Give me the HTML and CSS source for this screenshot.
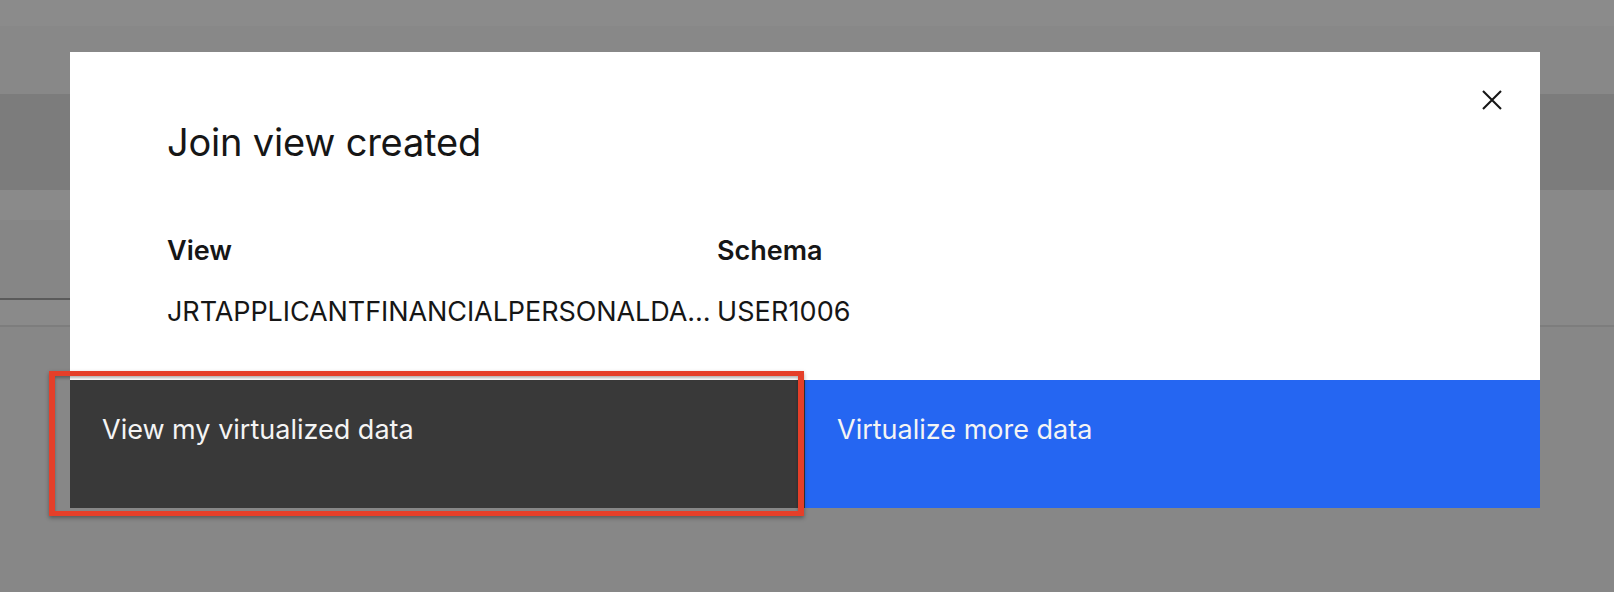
FILE: index.html
```html
<!DOCTYPE html>
<html lang="en">
<head>
<meta charset="utf-8">
<title>Join view created</title>
<link rel="stylesheet" href="styles.css">
</head>
<body>
  <div class="page">
    <div class="band b1"></div>
    <div class="band b2"></div>
    <div class="band b3"></div>
    <div class="band-row">
      <div class="side">
        <div class="s1"></div>
        <div class="s2"></div>
        <div class="s3"></div>
        <div class="s4"></div>
      </div>
      <div class="main-area"></div>
    </div>
    <div class="band rule"></div>
    <div class="band rest"></div>
  </div>

  <div class="overlay">
    <div class="modal" role="dialog" aria-label="Join view created">
      <div class="modal-body">
        <h2 class="modal-title">Join view created</h2>
        <div class="details">
          <div class="cell label">View</div>
          <div class="cell label">Schema</div>
          <div class="cell value tight" title="JRTAPPLICANTFINANCIALPERSONALDATA">JRTAPPLICANTFINANCIALPERSONALDA…</div>
          <div class="cell value">USER1006</div>
        </div>
      </div>
      <button class="close" aria-label="Close">
        <svg width="20" height="20" viewBox="0 0 20 20" aria-hidden="true">
          <path d="M1 1 L19 19 M19 1 L1 19" stroke="#161616" stroke-width="2.1" fill="none"/>
        </svg>
      </button>
      <div class="modal-footer">
        <button class="btn btn-secondary">View my virtualized data</button>
        <button class="btn btn-primary">Virtualize more data</button>
      </div>
    </div>
  </div>

  <div class="highlight"></div>
</body>
</html>
```

FILE: styles.css
```css
* { box-sizing: border-box; }

html, body {
  margin: 0;
  padding: 0;
  width: 1614px;
  height: 592px;
  overflow: hidden;
  background: #878787;
  font-family: "Inter", "Noto Sans", sans-serif;
}

.page {
  display: flex;
  flex-direction: column;
  width: 100%;
}

.band { width: 100%; }
.b1 { height: 26px; background: #8b8b8b; }
.b2 { height: 68px; background: #888888; }
.b3 { height: 96px; background: #7c7c7c; }

.band-row {
  display: flex;
  height: 135px;
}
.side {
  width: 300px;
  display: flex;
  flex-direction: column;
}
.s1 { height: 30px; background: #8a8a8a; }
.s2 { height: 78px; background: #868686; }
.s3 { height: 2px; background: #5a5a5a; }
.s4 { height: 25px; background: #8a8a8a; }
.main-area { flex: 1; background: #898989; }

.rule { height: 2px; background: #7d7d7d; }
.rest { height: 265px; background: #878787; }

.overlay {
  position: fixed;
  inset: 0;
  padding: 52px 0 0 70px;
}

.modal {
  position: relative;
  width: 1470px;
  background: #ffffff;
  color: #161616;
}

.modal-body {
  padding: 62px 97px 48px 97px;
}

.modal-title {
  margin: 0;
  font-size: 38px;
  line-height: 56px;
  font-weight: 400;
  letter-spacing: -0.2px;
}

.details {
  margin-top: 61px;
  display: grid;
  grid-template-columns: 550px 1fr;
  row-gap: 21px;
}

.cell {
  font-size: 27px;
  line-height: 40px;
  white-space: nowrap;
}
.label { font-weight: 600; }
.value { font-weight: 400; letter-spacing: 0.1px; }
.tight { letter-spacing: -0.08px; }

.close {
  position: absolute;
  top: 0;
  right: 0;
  width: 96px;
  height: 96px;
  border: 0;
  background: transparent;
  padding: 0;
  display: flex;
  align-items: center;
  justify-content: center;
}

.modal-footer {
  display: grid;
  grid-template-columns: 1fr 1fr;
  height: 128px;
}

.btn {
  border: 0;
  margin: 0;
  text-align: left;
  font-family: inherit;
  font-size: 27px;
  line-height: 40px;
  font-weight: 400;
  color: #f4f4f4;
  padding: 30px 32px 0 32px;
  display: flex;
  align-items: flex-start;
}
.btn-secondary { background: #393939; }
.btn-primary { background: #2566f2; }

.highlight {
  position: absolute;
  left: 49px;
  top: 371px;
  width: 755px;
  height: 145px;
  border-style: solid;
  border-color: #e53f29;
  border-width: 5px 6px 5px 6px;
  box-shadow: 0 2px 4px rgba(0, 0, 0, 0.35), inset 0 2px 3px rgba(0, 0, 0, 0.3);
  pointer-events: none;
}
```
